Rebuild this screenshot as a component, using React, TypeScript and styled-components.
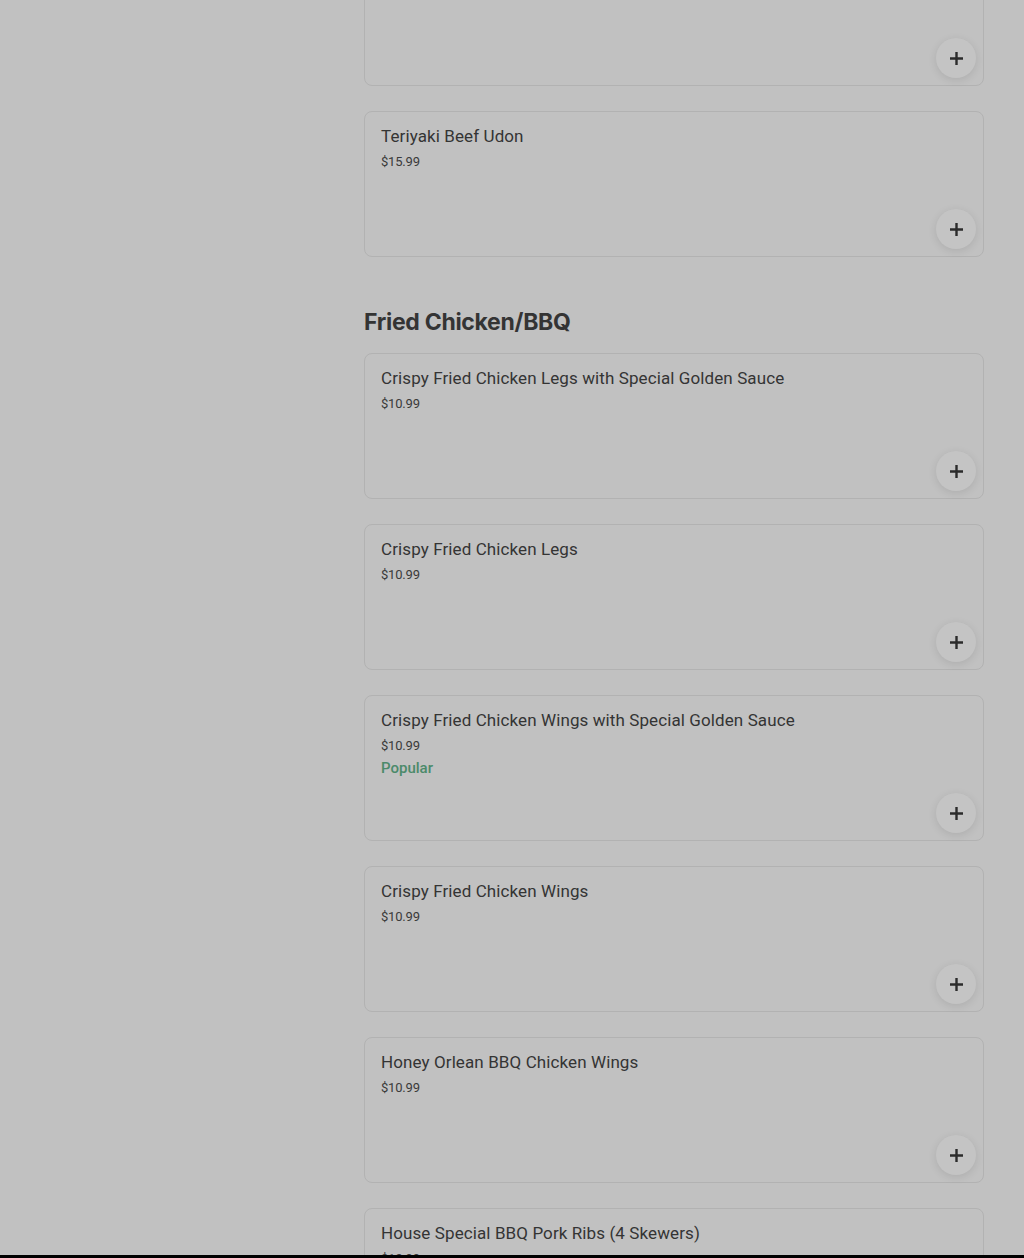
import * as React from 'react';
import styled, { createGlobalStyle } from 'styled-components';

const GlobalStyle = createGlobalStyle`
    html, body {
        margin: 0;
        padding: 0;
        background: #c1c1c1;
        font-family: Roboto, "Liberation Sans", sans-serif;
        overflow: hidden;
    }
`;

const Page = styled.div`
    display: grid;
    grid-template-columns: 364px 620px;
    height: 1258px;
    overflow: hidden;
`;

const Menu = styled.main`
    grid-column: 2;
    display: flex;
    flex-direction: column;
    margin-top: -60px;
`;

const Section = styled.section`
    display: flex;
    flex-direction: column;
    gap: 25px;
`;

const SectionTitle = styled.h2`
    margin: 49px 0 -10px;
    font-family: Inter, Roboto, sans-serif;
    font-size: 23px;
    font-weight: 700;
    letter-spacing: -0.3px;
    color: #343434;
    line-height: 32px;
`;

const Card = styled.div`
    position: relative;
    box-sizing: border-box;
    height: 146px;
    flex-shrink: 0;
    border: 1px solid #b2b2b2;
    border-radius: 8px;
    padding: 14px 16px;
    display: flex;
    flex-direction: column;
`;

const ItemName = styled.div`
    font-size: 17px;
    line-height: 20px;
    color: #343434;
    letter-spacing: 0.1px;
`;

const Price = styled.div`
    margin-top: 7px;
    font-size: 13px;
    line-height: 18px;
    color: #3a3a3a;
    letter-spacing: -0.2px;
`;

const Badge = styled.div`
    margin-top: 4px;
    font-size: 15px;
    font-weight: 500;
    line-height: 18px;
    color: #4b8a6a;
`;

const AddButton = styled.button`
    position: absolute;
    right: 7px;
    bottom: 7px;
    width: 40px;
    height: 40px;
    border: none;
    border-radius: 50%;
    background: #c4c4c4;
    box-shadow: 0 2px 8px rgba(0, 0, 0, 0.1);
    display: flex;
    align-items: center;
    justify-content: center;
    padding: 0;
    cursor: pointer;
`;

const BottomEdge = styled.div`
    position: fixed;
    left: 0;
    right: 0;
    bottom: 0;
    height: 3px;
    background: #000;
`;

type Item = { name: string; price: string; popular?: boolean };

const friedChicken: Item[] = [
    { name: 'Crispy Fried Chicken Legs with Special Golden Sauce', price: '$10.99' },
    { name: 'Crispy Fried Chicken Legs', price: '$10.99' },
    { name: 'Crispy Fried Chicken Wings with Special Golden Sauce', price: '$10.99', popular: true },
    { name: 'Crispy Fried Chicken Wings', price: '$10.99' },
    { name: 'Honey Orlean BBQ Chicken Wings', price: '$10.99' },
    { name: 'House Special BBQ Pork Ribs (4 Skewers)', price: '$12.99' },
];

function Plus() {
    return (
        <svg width="13" height="13" viewBox="0 0 13 13">
            <path d="M6.5 1v11M1 6.5h11" stroke="#2b2b2b" strokeWidth="2.4" strokeLinecap="square" />
        </svg>
    );
}

function MenuCard({ item }: { item?: Item }) {
    return (
        <Card>
            {item && <ItemName>{item.name}</ItemName>}
            {item && <Price>{item.price}</Price>}
            {item?.popular && <Badge>Popular</Badge>}
            <AddButton aria-label="Add">
                <Plus />
            </AddButton>
        </Card>
    );
}

export default function App() {
    return (
        <Page>
            <GlobalStyle />
            <Menu>
                <Section>
                    <MenuCard />
                    <MenuCard item={{ name: 'Teriyaki Beef Udon', price: '$15.99' }} />
                </Section>
                <Section>
                    <SectionTitle>Fried Chicken/BBQ</SectionTitle>
                    {friedChicken.map((item) => (
                        <MenuCard key={item.name} item={item} />
                    ))}
                </Section>
            </Menu>
            <BottomEdge />
        </Page>
    );
}
